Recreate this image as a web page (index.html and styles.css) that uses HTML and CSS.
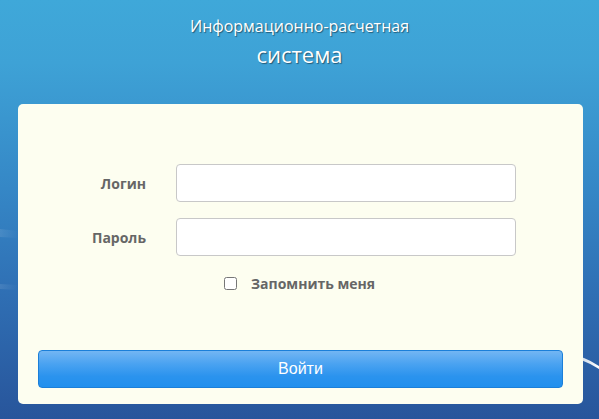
FILE: index.html
```html
<!DOCTYPE html>
<html lang="ru">
<head>
<meta charset="utf-8">
<link rel="stylesheet" href="styles.css">
</head>
<body>
<div class="page">
  <svg class="backdrop" width="599" height="419" viewBox="0 0 599 419" aria-hidden="true">
    <defs>
      <linearGradient id="streak" x1="0" y1="0" x2="1" y2="0">
        <stop offset="0" stop-color="#ffffff" stop-opacity="0.5"/>
        <stop offset="1" stop-color="#ffffff" stop-opacity="1"/>
      </linearGradient>
      <linearGradient id="glow" x1="0" y1="0" x2="1" y2="0">
        <stop offset="0" stop-color="#ffffff" stop-opacity="0.1"/>
        <stop offset="1" stop-color="#ffffff" stop-opacity="0"/>
      </linearGradient>
    </defs>
    <path d="M560 352 Q585 356 599 366 L599 369 Q584 359 560 354 Z" fill="url(#streak)"/>
    <path d="M0 229 L18 231 L18 238 L0 237 Z" fill="url(#glow)"/>
    <path d="M0 284 L18 285 L18 290 L0 289 Z" fill="url(#glow)"/>
  </svg>
  <header class="title">
    <div class="title-line1">Информационно-расчетная</div>
    <div class="title-line2">система</div>
  </header>
  <main class="card">
    <form class="form">
      <div class="row">
        <label class="label" for="login">Логин</label>
        <input class="field" id="login" type="text">
      </div>
      <div class="row">
        <label class="label" for="pass">Пароль</label>
        <input class="field" id="pass" type="password">
      </div>
      <div class="remember">
        <input class="check" id="rem" type="checkbox">
        <label class="remember-label" for="rem">Запомнить меня</label>
      </div>
      <button class="submit" type="button">Войти</button>
    </form>
  </main>
</div>
</body>
</html>
```
FILE: styles.css
```css
html, body {
  margin: 0;
  padding: 0;
  height: 100%;
}
body {
  font-family: "Open Sans", "DejaVu Sans", sans-serif;
  background: linear-gradient(180deg, #3fa8d9 0%, #3ea2d6 15%, #3587c6 45%, #2f6fb4 70%, #28559b 100%);
  overflow: hidden;
}
.page {
  height: 419px;
  display: flex;
  flex-direction: column;
  position: relative;
  overflow: hidden;
}
.backdrop {
  position: absolute;
  left: 0;
  top: 0;
  z-index: 0;
}
.title {
  text-align: center;
  color: #fff;
  text-shadow: 1px 1px 1px rgba(0, 0, 0, 0.45);
  padding-top: 15px;
  height: 104px;
  box-sizing: border-box;
  position: relative;
  z-index: 1;
}
.title-line1 {
  font-size: 16px;
  line-height: 22px;
}
.title-line2 {
  font-size: 22px;
  line-height: 30px;
  margin-top: 2px;
}
.card {
  margin: 0 16px 0 18px;
  background: #fdfef0;
  border-radius: 5px;
  height: 300px;
  box-sizing: border-box;
  padding: 60px 20px 16px 20px;
  position: relative;
  z-index: 1;
}
.form {
  display: flex;
  flex-direction: column;
  height: 100%;
}
.row {
  display: grid;
  grid-template-columns: 108px 340px;
  column-gap: 30px;
  align-items: center;
  margin-bottom: 16px;
}
.label {
  text-align: right;
  font-weight: bold;
  font-size: 14px;
  color: #666666;
}
.field {
  height: 38px;
  box-sizing: border-box;
  border: 1px solid #c8c8c8;
  border-radius: 4px;
  background: #fff;
  margin: 0;
  padding: 4px 8px;
  font: inherit;
}
.remember {
  display: flex;
  align-items: center;
  margin-left: 186px;
  margin-top: 0;
  height: 22px;
}
.check {
  width: 13px;
  height: 13px;
  margin: 0 14px 0 0;
}
.remember-label {
  font-weight: bold;
  font-size: 14px;
  color: #666666;
}
.submit {
  margin-top: auto;
  height: 38px;
  width: 100%;
  border: 1px solid #1b7fd9;
  border-radius: 4px;
  background: linear-gradient(180deg, #73b6f3 0%, #4ba3f1 35%, #2b93ee 70%, #2190ee 100%);
  color: #fff;
  font-family: "Liberation Sans", Arial, sans-serif;
  font-size: 16px;
  cursor: pointer;
}
```
